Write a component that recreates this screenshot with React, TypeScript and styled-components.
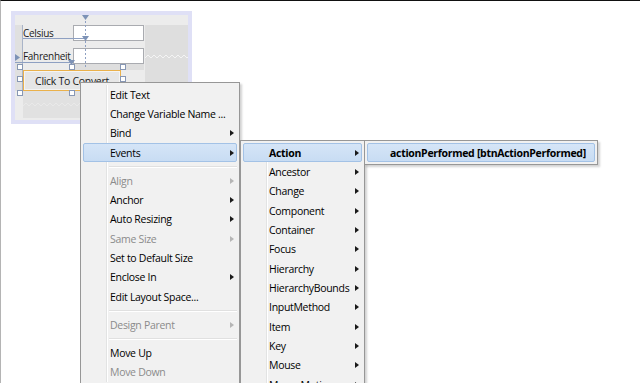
import React from "react";
import styled, { createGlobalStyle } from "styled-components";

const Global = createGlobalStyle`
  html, body { margin: 0; padding: 0; background: #ffffff; overflow: hidden; }
  body { font-family: "Open Sans", "Noto Sans", sans-serif; }
`;

const Screen = styled.div`
  position: relative;
  width: 640px;
  height: 383px;
  box-sizing: border-box;
  border-top: 1px solid #111;
  border-left: 1px solid #b4b4b4;
  background: #ffffff;
  overflow: hidden;
  padding: 10px 0 0 10px;
`;

/* ---------- design form ---------- */
const FormFrame = styled.div`
  width: 181px;
  height: 113px;
  box-sizing: border-box;
  padding: 4px;
  background: #dfe0f6;
`;

const FormInner = styled.div`
  position: relative;
  width: 173px;
  height: 105px;
  background: #ececec;
  display: grid;
  grid-template-columns: 8px 50px 71px 1px 43px;
  grid-template-rows: 10px 16px 7px 16px 6px 21px 27px 2px;
  font-size: 10px;
  letter-spacing: -0.3px;
  color: #1a1a1a;
`;

const LeftStrip = styled.div`
  grid-column: 1;
  grid-row: 2 / 7;
  background: #e0e0e0;
  border-right: 1px solid #a9b4c8;
`;

const Label = styled.div<{ $row: number }>`
  grid-column: 2;
  grid-row: ${(p) => p.$row};
  display: flex;
  align-items: center;
  white-space: nowrap;
`;

const Field = styled.div<{ $row: number }>`
  grid-column: 3;
  grid-row: ${(p) => p.$row};
  background: #ffffff;
  border: 1px solid #a9abb0;
  box-sizing: border-box;
`;

const FieldStrip = styled.div`
  grid-column: 3;
  grid-row: 5;
  background: #dedede;
`;

const SidePanel = styled.div`
  grid-column: 5;
  grid-row: 2 / 7;
  background: #dedede;
  display: flex;
  align-items: flex-start;
  padding-top: 30px;
  box-sizing: border-box;
`;

const ConvertButton = styled.div`
  grid-column: 2 / 4;
  grid-row: 6;
  width: 98px;
  box-sizing: border-box;
  border: 1px solid #eab14c;
  background: #e6e6e6;
  box-shadow: inset 0 0 0 1px #f4f4f4;
  display: flex;
  align-items: center;
  justify-content: center;
  font-size: 10.5px;
  color: #1a1a1a;
`;

const BelowButton = styled.div`
  grid-column: 2 / 4;
  grid-row: 7;
  width: 98px;
  background: #e1e1e1;
  display: flex;
  align-items: center;
`;

const Overlay = styled.svg`
  position: absolute;
  inset: 0;
  width: 173px;
  height: 105px;
  pointer-events: none;
`;

const Zigzag = ({ w, color }: { w: number; color: string }) => {
  let d = "M0 3";
  for (let x = 0; x < w; x += 6) d += ` L${x + 3} 0 L${x + 6} 3`;
  return (
    <svg width={w} height={4} viewBox={`0 0 ${w} 4`} style={{ display: "block" }}>
      <path d={d} fill="none" stroke={color} strokeWidth={1} />
    </svg>
  );
};

const handles: [number, number][] = [
  [5, 52], [57, 52], [108, 52],
  [5, 64], [108, 64],
  [5, 78], [57, 78], [108, 78],
];

const DesignOverlay = () => (
  <Overlay viewBox="0 0 173 105">
    <line x1={70.5} y1={2} x2={70.5} y2={52} stroke="#8ea0c2" strokeDasharray="2 2" />
    <line x1={8} y1={23.5} x2={70} y2={23.5} stroke="#8ea0c2" />
    <line x1={0} y1={47.5} x2={56} y2={47.5} stroke="#8ea0c2" />
    <path d="M67 0 H74 L70.5 5 Z" fill="#7d92b6" />
    <path d="M67 21 H74 L70.5 26 Z" fill="#7d92b6" />
    <path d="M53 45 H60 L56.5 50 Z" fill="#7d92b6" />
    <path d="M0 39 V46 L5 42.5 Z" fill="#7d92b6" />
    {handles.map(([x, y], i) => (
      <rect key={i} x={x - 2.5} y={y - 2.5} width={5} height={5} fill="#fff" stroke="#8797b4" />
    ))}
  </Overlay>
);

/* ---------- menus ---------- */
const Menu = styled.div<{ $x: number; $y: number; $w: number }>`
  position: absolute;
  left: ${(p) => p.$x}px;
  top: ${(p) => p.$y}px;
  width: ${(p) => p.$w}px;
  box-sizing: border-box;
  padding: 2px;
  background: #f1f1f1;
  border: 1px solid #979797;
  box-shadow: 2px 2px 2px rgba(0, 0, 0, 0.18);
  font-size: 10.5px;
  letter-spacing: -0.3px;
  color: #000;
  display: flex;
  flex-direction: column;
  &::before {
    content: "";
    position: absolute;
    top: 2px;
    bottom: 2px;
    left: 25px;
    border-left: 1px solid #e2e3e3;
    border-right: 1px solid #ffffff;
  }
`;

const Item = styled.div<{ $disabled?: boolean; $active?: boolean; $bold?: boolean; $pad: number }>`
  position: relative;
  height: 19.33px;
  box-sizing: border-box;
  display: flex;
  align-items: center;
  justify-content: space-between;
  padding: 0 2px 0 ${(p) => p.$pad}px;
  white-space: nowrap;
  font-weight: ${(p) => (p.$bold ? 700 : 400)};
  color: ${(p) => (p.$disabled ? "#8b8b8b" : "#000")};
  border: 1px solid ${(p) => (p.$active ? "#a3c2e6" : "transparent")};
  border-radius: 2px;
  background: ${(p) => (p.$active ? "linear-gradient(#d5e5f7, #c8dcf3)" : "transparent")};
  z-index: 1;
`;

const Arrow = styled.span<{ $disabled?: boolean }>`
  width: 0;
  height: 0;
  border-top: 3.5px solid transparent;
  border-bottom: 3.5px solid transparent;
  border-left: 4px solid ${(p) => (p.$disabled ? "#b5b5b5" : "#1a1a1a")};
`;

const Separator = styled.div`
  height: 8.66px;
  display: flex;
  align-items: center;
  padding-left: 26px;
  &::after {
    content: "";
    flex: 1;
    border-top: 1px solid #e0e0e0;
    border-bottom: 1px solid #ffffff;
  }
`;

type Entry =
  | { sep: true }
  | { label: string; sub?: boolean; disabled?: boolean; active?: boolean; bold?: boolean };

const mainMenu: Entry[] = [
  { label: "Edit Text" },
  { label: "Change Variable Name ..." },
  { label: "Bind", sub: true },
  { label: "Events", sub: true, active: true },
  { sep: true },
  { label: "Align", sub: true, disabled: true },
  { label: "Anchor", sub: true },
  { label: "Auto Resizing", sub: true },
  { label: "Same Size", sub: true, disabled: true },
  { label: "Set to Default Size" },
  { label: "Enclose In", sub: true },
  { label: "Edit Layout Space..." },
  { sep: true },
  { label: "Design Parent", sub: true, disabled: true },
  { sep: true },
  { label: "Move Up" },
  { label: "Move Down", disabled: true },
];

const eventsMenu: Entry[] = [
  { label: "Action", sub: true, active: true, bold: true },
  ...[
    "Ancestor",
    "Change",
    "Component",
    "Container",
    "Focus",
    "Hierarchy",
    "HierarchyBounds",
    "InputMethod",
    "Item",
    "Key",
    "Mouse",
    "MouseMotion",
  ].map((label) => ({ label, sub: true })),
];

const actionMenu: Entry[] = [
  { label: "actionPerformed [btnActionPerformed]", active: true, bold: true },
];

const MenuList = ({ entries, x, y, w, pad }: { entries: Entry[]; x: number; y: number; w: number; pad: number }) => (
  <Menu $x={x} $y={y} $w={w}>
    {entries.map((e, i) =>
      "sep" in e ? (
        <Separator key={i} />
      ) : (
        <Item key={i} $disabled={e.disabled} $active={e.active} $bold={e.bold} $pad={pad}>
          <span>{e.label}</span>
          {e.sub && <Arrow $disabled={e.disabled} />}
        </Item>
      )
    )}
  </Menu>
);

export default function App() {
  return (
    <>
      <Global />
      <Screen>
        <FormFrame>
          <FormInner>
            <LeftStrip />
            <Label $row={2}>Celsius</Label>
            <Field $row={2} />
            <Label $row={4}>Fahrenheit</Label>
            <Field $row={4} />
            <FieldStrip />
            <SidePanel>
              <Zigzag w={43} color="#f4f4f4" />
            </SidePanel>
            <ConvertButton>Click To Convert</ConvertButton>
            <BelowButton>
              <Zigzag w={98} color="#e9e9e9" />
            </BelowButton>
            <DesignOverlay />
          </FormInner>
        </FormFrame>

        <MenuList entries={mainMenu} x={79} y={81} w={160} pad={26} />
        <MenuList entries={eventsMenu} x={239} y={139} w={125} pad={25} />
        <MenuList entries={actionMenu} x={363} y={139} w={234} pad={22} />
      </Screen>
    </>
  );
}
